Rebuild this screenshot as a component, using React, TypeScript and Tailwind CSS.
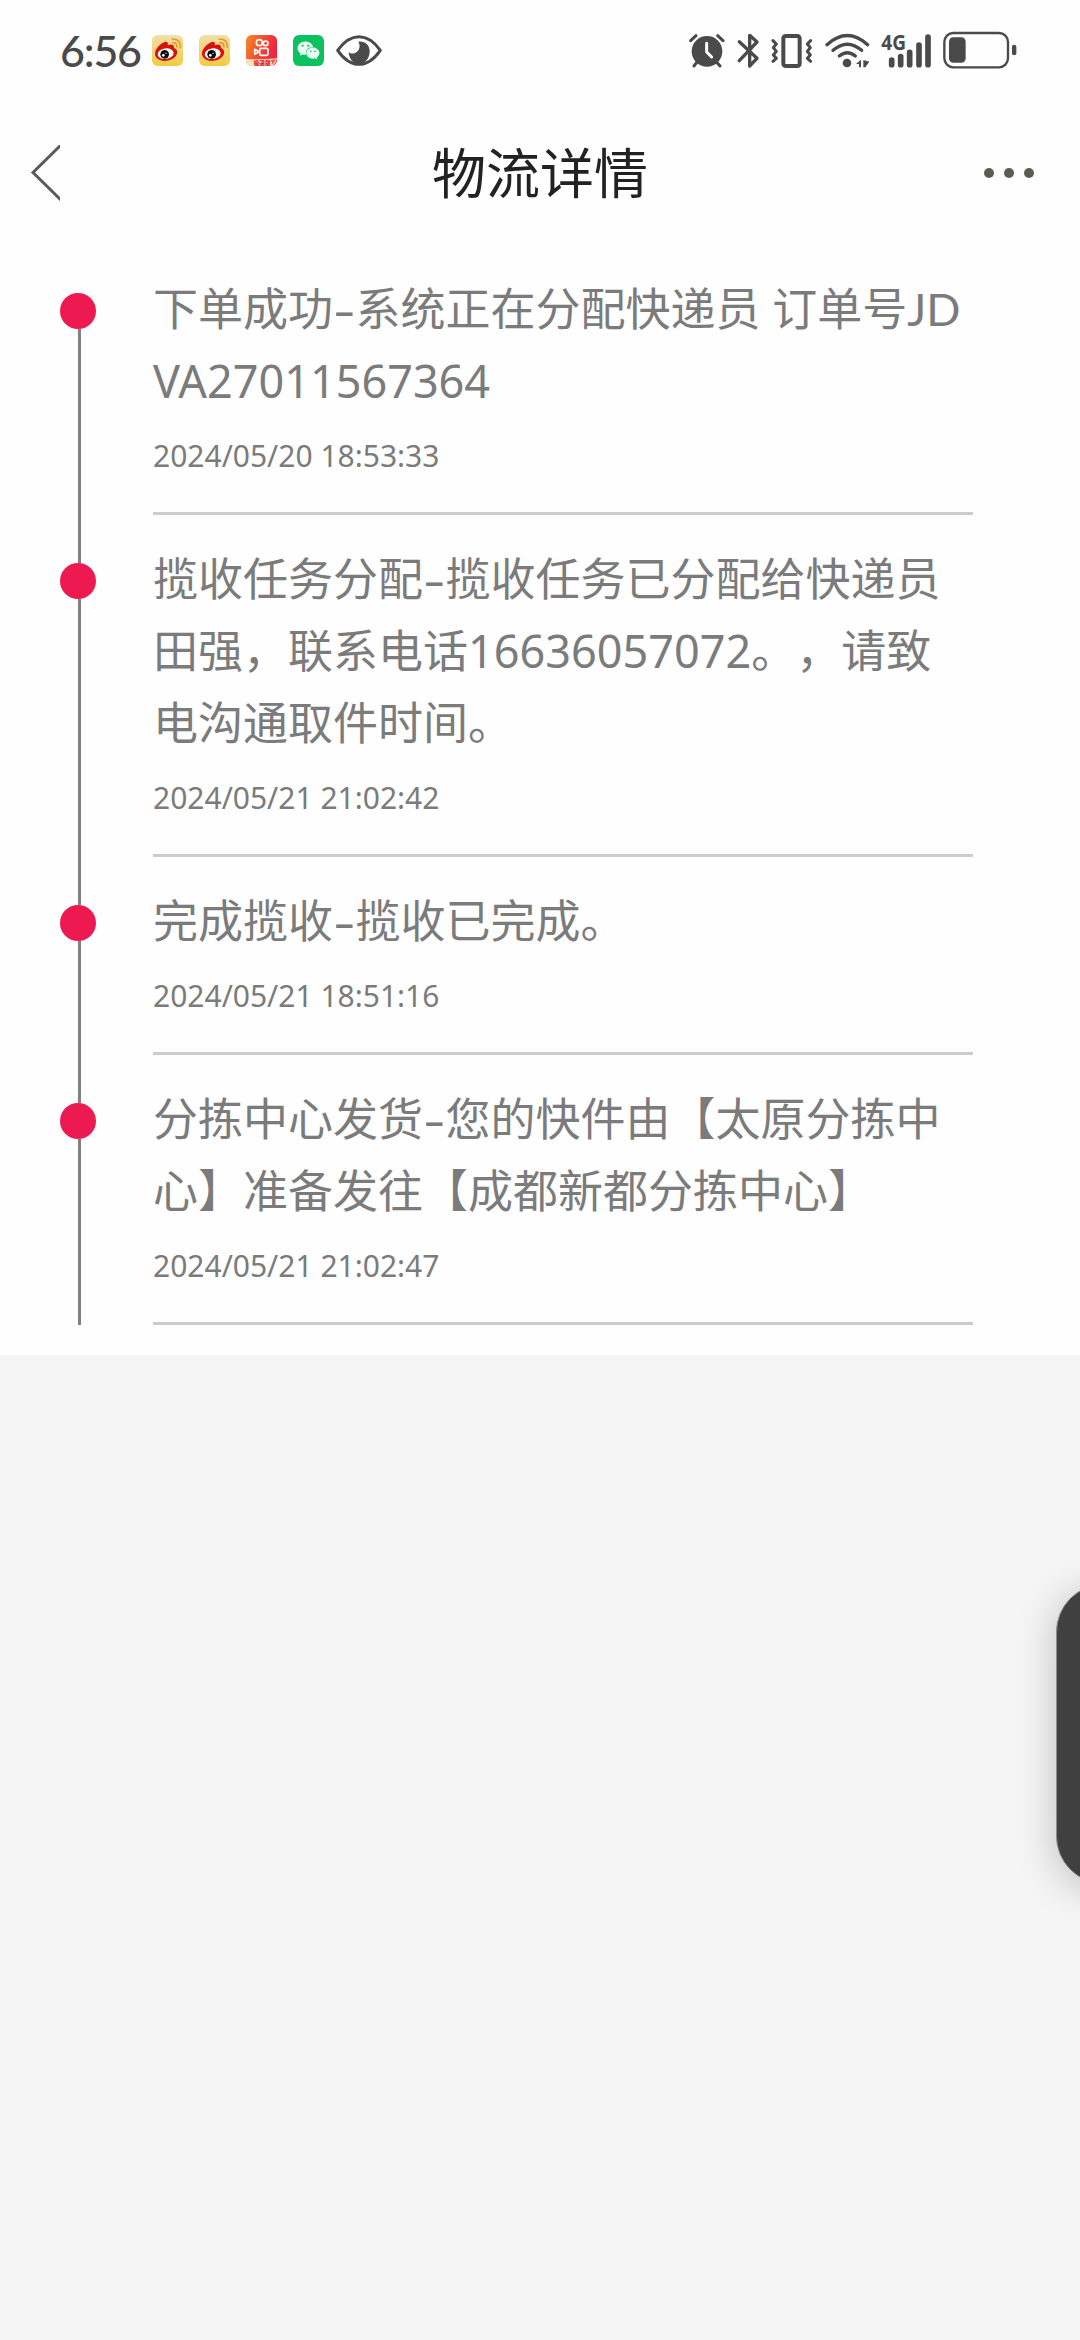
import React from "react";
import { FaWeixin } from "react-icons/fa";

type Step = {
    lines: React.ReactNode[];
    time: string;
};

// Wide hyphen, as the system font draws it
const Dash = () => (
    <span className="inline-block w-[22.5px] text-center">
        <span className="inline-block scale-x-150">-</span>
    </span>
);

const steps: Step[] = [
    {
        lines: [
            <>下单成功<Dash />系统正在分配快递员 订单号<span className="font-['Lato']">JD</span></>,
            "VA27011567364",
        ],
        time: "2024/05/20 18:53:33",
    },
    {
        lines: [
            <>揽收任务分配<Dash />揽收任务已分配给快递员</>,
            "田强，联系电话16636057072。，请致",
            "电沟通取件时间。",
        ],
        time: "2024/05/21 21:02:42",
    },
    {
        lines: [<>完成揽收<Dash />揽收已完成。</>],
        time: "2024/05/21 18:51:16",
    },
    {
        lines: [
            <>分拣中心发货<Dash />您的快件由【太原分拣中</>,
            "心】准备发往【成都新都分拣中心】",
        ],
        time: "2024/05/21 21:02:47",
    },
];

const WeiboIcon = () => (
    <svg className="h-[31px] w-[31px]" viewBox="336 75 93 93">
        <defs>
            <linearGradient id="weibo" x1="0" y1="0" x2="0" y2="1">
                <stop offset="0" stopColor="#f0dfa8" />
                <stop offset="1" stopColor="#f3cb42" />
            </linearGradient>
        </defs>
        <rect x="336" y="75" width="93" height="93" rx="17" fill="url(#weibo)" />
        <path d="M345 130C346 116 361 100 374 96C382 94 386 99 383 106C394 101 404 104 402 114C412 118 414 127 409 136C401 149 385 154 370 153C355 151 344 142 345 130Z" fill="#d9120f" />
        <ellipse cx="377" cy="131" rx="24" ry="16" fill="#fff" transform="rotate(-8 377 131)" />
        <circle cx="374" cy="133" r="13" fill="#0d0d0d" />
        <circle cx="370" cy="136" r="4" fill="#fff" />
        <circle cx="378" cy="130" r="2" fill="#fff" />
        <path d="M399 98Q411 98 411 111" fill="none" stroke="#e39a2c" strokeWidth="5" strokeLinecap="round" />
        <path d="M396 87Q422 86 421 112" fill="none" stroke="#e39a2c" strokeWidth="5" strokeLinecap="round" />
    </svg>
);

const KuaishouIcon = () => (
    <svg className="h-[31px] w-[31px]" viewBox="618 75 93 93">
        <defs>
            <linearGradient id="kuaishou" x1="0" y1="0" x2="1" y2="0.4">
                <stop offset="0" stopColor="#f58a2a" />
                <stop offset="0.5" stopColor="#f4502e" />
                <stop offset="1" stopColor="#ee2340" />
            </linearGradient>
            <clipPath id="kuaishouClip">
                <rect x="618" y="75" width="93" height="93" rx="17" />
            </clipPath>
        </defs>
        <g clipPath="url(#kuaishouClip)">
            <rect x="618" y="75" width="93" height="93" fill="url(#kuaishou)" />
            <path d="M618 146Q650 150 711 145Q708 158 700 168H618Z" fill="#fbe3c0" />
            <g fill="none" stroke="#fff" strokeWidth="5">
                <circle cx="658" cy="98" r="9" />
                <circle cx="677" cy="100" r="7" />
                <rect x="659" y="115" width="25" height="21" rx="4" />
                <path d="M657 125L644 118V133Z" strokeLinejoin="round" />
            </g>
            <text x="641" y="164" fontSize="17" fontWeight="900" fill="#d8262c" fontFamily="'Noto Sans CJK SC', sans-serif">极速版</text>
            <path d="M692 150L707 147L699 165Z" fill="#f0603a" />
        </g>
    </svg>
);

const EyeIcon = () => (
    <svg className="h-[31px] w-[46px]" viewBox="888 75 138 93">
        <path d="M893 121Q922 80 957 80Q992 80 1021 121Q992 163 957 163Q922 163 893 121Z" fill="none" stroke="#4a4a4a" strokeWidth="9" strokeLinejoin="round" />
        <path d="M955 95C973 92 989 104 989 124C989 146 975 162 957 162C940 162 927 147 926 126C931 131 941 133 949 127C959 119 962 107 955 95Z" fill="#4a4a4a" />
    </svg>
);

const AlarmIcon = () => (
    <svg className="h-[35px] w-[36px]" viewBox="54 68 108 105">
        <g fill="none" stroke="#4a4a4a" strokeWidth="9" strokeLinecap="round">
            <path d="M59 91L75 76M140 76L156 91M79 154L69 167M136 154L147 167" />
        </g>
        <circle cx="108" cy="123" r="46" fill="#4a4a4a" />
        <path d="M107 99V125L122 140" fill="none" stroke="#fff" strokeWidth="9" strokeLinecap="round" strokeLinejoin="round" />
    </svg>
);

const BluetoothIcon = () => (
    <svg className="h-[35px] w-[23px]" viewBox="197 68 69 105">
        <path d="M204 94L257 144L235 167V75L257 95L204 151" fill="none" stroke="#4a4a4a" strokeWidth="10" strokeLinecap="round" strokeLinejoin="round" />
    </svg>
);

const VibrateIcon = () => (
    <svg className="h-[35px] w-[42px]" viewBox="301 68 126 105">
        <rect x="338" y="77" width="49" height="90" rx="7" fill="none" stroke="#4a4a4a" strokeWidth="12" />
        <g fill="none" stroke="#4a4a4a" strokeWidth="9" strokeLinecap="round" strokeLinejoin="round">
            <path d="M307 91L317 101L308 112L317 123L308 134L317 144L307 153" />
            <path d="M420 91L410 101L419 112L410 123L419 134L410 144L420 153" />
        </g>
    </svg>
);

const WifiIcon = () => (
    <svg className="h-[35px] w-[45px]" viewBox="461 68 135 105">
        <g fill="none" stroke="#4a4a4a" strokeWidth="10" strokeLinecap="round">
            <path d="M467 103Q528 48 589 103" />
            <path d="M485 120Q528 83 571 120" />
            <path d="M504 137Q528 117 552 137" />
        </g>
        <circle cx="527" cy="158" r="13" fill="#4a4a4a" />
        <path d="M554 161L569 148V171H563V161ZM576 149L594 154L582 171H576Z" fill="#4a4a4a" />
    </svg>
);

const SignalIcon = () => (
    <svg className="h-[47px] w-[51px]" viewBox="629 50 153 141">
        <text x="630" y="120" fontSize="63" fontWeight="700" fill="#4a4a4a" fontFamily="'Noto Sans', sans-serif" textLength="74" lengthAdjust="spacingAndGlyphs">4G</text>
        <g stroke="#4a4a4a" strokeWidth="17" strokeLinecap="round">
            <path d="M661 149V163M688 139V163M715 126V163M743 104V163M770 80V163" />
        </g>
    </svg>
);

const BatteryIcon = () => (
    <svg className="h-[38px] w-[74px]" viewBox="815 65 222 114">
        <rect x="819" y="71" width="191" height="103" rx="27" fill="none" stroke="#4a4a4a" strokeWidth="7" />
        <rect x="833" y="84" width="50" height="76" rx="13" fill="#4a4a4a" />
        <rect x="1022" y="106" width="13" height="32" rx="6" fill="#4a4a4a" />
    </svg>
);

function StatusBar() {
    return (
        <div className="flex h-[100px] items-center justify-between pr-[63px] pl-[60px]">
            <div className="flex items-center">
                <span className="w-[92px] font-['Lato'] text-[43px] leading-none font-medium tracking-[-1.2px] text-[#4a4a4a]">6:56</span>
                <div className="flex items-center gap-4">
                    <WeiboIcon />
                    <WeiboIcon />
                    <KuaishouIcon />
                    <div className="flex h-[31px] w-[31px] items-center justify-center rounded-md bg-[#0cc160]">
                        <FaWeixin className="h-[23px] w-[23px] text-[#e9fbf1]" />
                    </div>
                </div>
                <div className="ml-3">
                    <EyeIcon />
                </div>
            </div>
            <div className="flex items-center">
                <AlarmIcon />
                <div className="ml-[12px]"><BluetoothIcon /></div>
                <div className="ml-[11px]"><VibrateIcon /></div>
                <div className="ml-[12px]"><WifiIcon /></div>
                <div className="ml-[11px]"><SignalIcon /></div>
                <div className="ml-[11px]"><BatteryIcon /></div>
            </div>
        </div>
    );
}

function Header() {
    return (
        <div className="flex h-[145px] items-center justify-between pr-[46px] pl-[30px]">
            <svg className="h-[56px] w-[30px]" viewBox="0 0 30 56">
                <path d="M32 -1L3 27.5L32 56" fill="none" stroke="#5a5a5a" strokeWidth="3" />
            </svg>
            <h1 className="ml-[36px] text-[54px] leading-none text-[#222]">物流详情</h1>
            <div className="flex gap-[10px]">
                <span className="h-[10px] w-[10px] rounded-full bg-[#5c5c52]" />
                <span className="h-[10px] w-[10px] rounded-full bg-[#5c5c52]" />
                <span className="h-[10px] w-[10px] rounded-full bg-[#5c5c52]" />
            </div>
        </div>
    );
}

function StepRow({ step, first }: { step: Step; first: boolean }) {
    return (
        <div className="flex">
            {/* Rail */}
            <div className="flex w-[93px] flex-col">
                <div className={first ? "ml-[18px] h-12 w-[3px]" : "ml-[18px] h-12 w-[3px] bg-[#808080]"} />
                <div className="h-9 w-9 rounded-full bg-[#ec1a50]" />
                <div className="ml-[18px] w-[3px] flex-1 bg-[#808080]" />
            </div>
            <div className="w-[820px] border-b-[3px] border-[#ccc] pt-[28px] pb-[34px] text-[#7b7b7b]">
                {step.lines.map((line, i) => (
                    <p key={i} className="h-[72px] text-[45px] leading-[72px] whitespace-nowrap">{line}</p>
                ))}
                <p className="mt-[16px] h-[45px] text-[30px] leading-[45px]">{step.time}</p>
            </div>
        </div>
    );
}

export default function App() {
    return (
        <div lang="zh-CN" className="relative h-[2340px] w-[1080px] overflow-hidden bg-[#f5f5f5] font-['Noto_Sans','Noto_Sans_CJK_SC',sans-serif] [text-spacing-trim:space-all]">
            <div className="h-[1355px] bg-[#fefefe]">
                <StatusBar />
                <Header />
                <div className="pl-[60px]">
                    {steps.map((step, i) => (
                        <StepRow key={step.time} step={step} first={i === 0} />
                    ))}
                </div>
            </div>

            {/* Edge panel handle */}
            <div className="absolute top-[1584px] -right-[72px] h-[300px] w-24 rounded-[48px] border border-[#8a8a8a] bg-[#404040] shadow-[0_6px_40px_rgba(0,0,0,0.22)]" />
        </div>
    );
}
